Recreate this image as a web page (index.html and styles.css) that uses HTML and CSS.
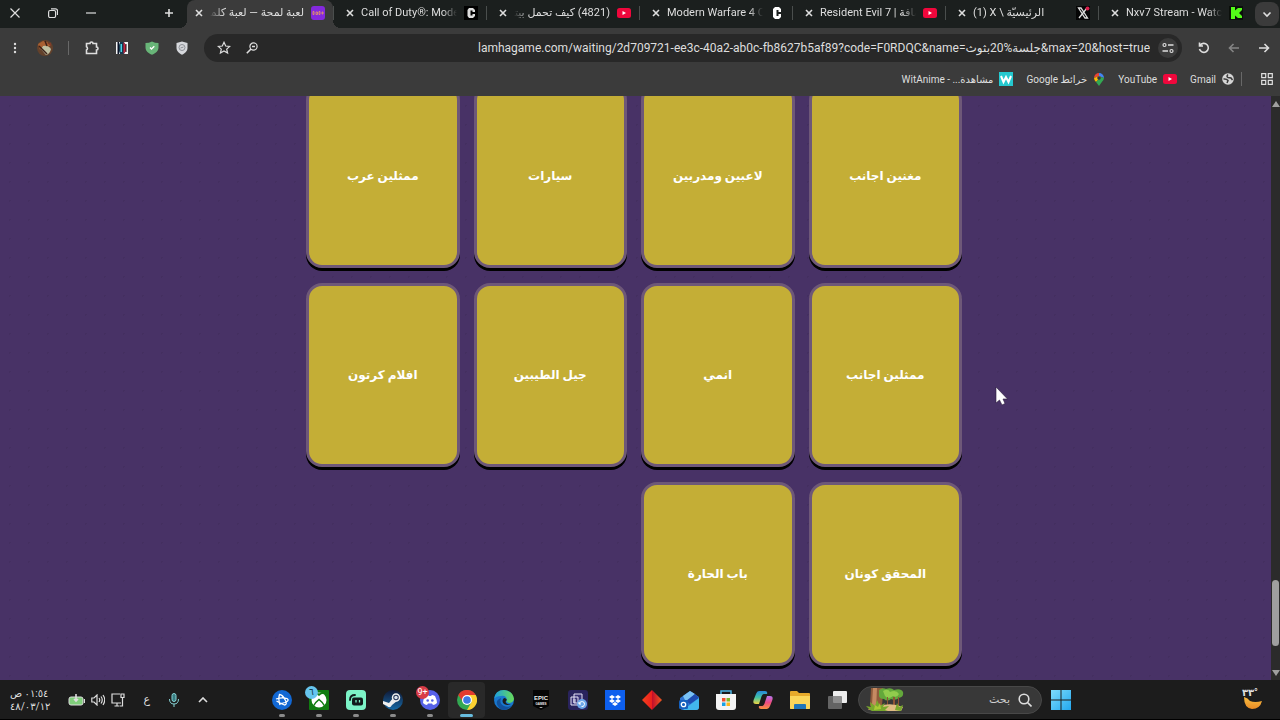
FILE: index.html
```html
<!DOCTYPE html>
<html lang="ar" dir="rtl">
<head>
    <meta charset="UTF-8">
    <meta name="viewport" content="width=device-width, initial-scale=1.0">
    <title>لعبة لمحة</title>
    <link rel="stylesheet" href="styles.css">
</head>
<body>
    <header class="browser">
        <div class="tab-strip">
            <button class="tab-search" aria-label="Search tabs">
                <svg width="10" height="10" viewBox="0 0 10 10"><path d="M1.5 3.5 5 7l3.500-3.500" class="line bold"/></svg>
            </button>
            <div class="tabs">
                <div class="tab">
                    <svg class="favicon" viewBox="0 0 14 14"><rect width="14" height="14" fill="#0b0f0b"/><path d="M2 1h4v3.500L9 2h4v2l-3 3 3 3v2H9L6 9.500V13H2z" fill="#53fc18"/></svg>
                    <span class="tab-title" dir="ltr">Nxv7 Stream - Watch</span>
                    <button class="tab-close" aria-label="Close tab"><svg width="8" height="8" viewBox="0 0 8 8"><path d="m1 1 6 6M7 1 1 7" class="line bold"/></svg></button>
                </div>
                <div class="tab">
                    <svg class="favicon" viewBox="0 0 14 14"><rect width="14" height="14" fill="#050505"/><path d="M2.500 2h2.500l6.500 10H9zM11 2 3 12" fill="none" stroke="#ddd" stroke-width="1.300"/><circle cx="11.500" cy="2.500" r="2" fill="#d8204c"/></svg>
                    <span class="tab-title" dir="ltr">(1) X \ الرئيسيّة</span>
                    <button class="tab-close" aria-label="Close tab"><svg width="8" height="8" viewBox="0 0 8 8"><path d="m1 1 6 6M7 1 1 7" class="line bold"/></svg></button>
                </div>
                <div class="tab">
                    <svg class="favicon" viewBox="0 0 14 14"><rect y="2" width="14" height="10" rx="2.500" fill="#f0073c"/><path d="m5.500 5 3.500 2-3.500 2z" fill="#fff"/></svg>
                    <span class="tab-title" dir="ltr">Resident Evil 7 | ضافة</span>
                    <button class="tab-close" aria-label="Close tab"><svg width="8" height="8" viewBox="0 0 8 8"><path d="m1 1 6 6M7 1 1 7" class="line bold"/></svg></button>
                </div>
                <div class="tab">
                    <svg class="favicon" viewBox="0 0 14 14"><path d="M5 1h4l2 2v3H8.500V4h-2v6h2V8H11v3l-2 2H5l-2-2V3z" fill="#fff"/></svg>
                    <span class="tab-title" dir="ltr">Modern Warfare 4 O</span>
                    <button class="tab-close" aria-label="Close tab"><svg width="8" height="8" viewBox="0 0 8 8"><path d="m1 1 6 6M7 1 1 7" class="line bold"/></svg></button>
                </div>
                <div class="tab">
                    <svg class="favicon" viewBox="0 0 14 14"><rect y="2" width="14" height="10" rx="2.500" fill="#f0073c"/><path d="m5.500 5 3.500 2-3.500 2z" fill="#fff"/></svg>
                    <span class="tab-title" dir="rtl">(4821) كيف تحمل بيتا</span>
                    <button class="tab-close" aria-label="Close tab"><svg width="8" height="8" viewBox="0 0 8 8"><path d="m1 1 6 6M7 1 1 7" class="line bold"/></svg></button>
                </div>
                <div class="tab">
                    <svg class="favicon" viewBox="0 0 14 14"><rect width="14" height="14" fill="#000"/><path d="M5 2h4l2 2v2H8.500V4.500h-2v5h2V8H11v2l-2 2H5l-1.500-2V4z" fill="#ddd"/></svg>
                    <span class="tab-title" dir="ltr">Call of Duty®: Mode</span>
                    <button class="tab-close" aria-label="Close tab"><svg width="8" height="8" viewBox="0 0 8 8"><path d="m1 1 6 6M7 1 1 7" class="line bold"/></svg></button>
                </div>
                <div class="tab active">
                    <svg class="favicon" viewBox="0 0 14 14"><rect width="14" height="14" rx="3" fill="#8429dd"/><path d="M2 5.500h1v3H2zM5 6h1.500v2.500H5zM8 5.500h1v3H8zM11 6h1v2h-1z" fill="none" stroke="#e8a060" stroke-width=".8"/></svg>
                    <span class="tab-title" dir="rtl">لعبة لمحة — لعبة كلما</span>
                    <button class="tab-close" aria-label="Close tab"><svg width="8" height="8" viewBox="0 0 8 8"><path d="m1 1 6 6M7 1 1 7" class="line bold"/></svg></button>
                </div>
            </div>
            <button class="new-tab" aria-label="New tab"><svg width="10" height="10" viewBox="0 0 10 10"><path d="M5 1v8M1 5h8" class="line bold"/></svg></button>
            <div class="window-controls">
                <button aria-label="Minimize"><svg width="10" height="10" viewBox="0 0 10 10"><path d="M0 5h10" class="line"/></svg></button>
                <button aria-label="Restore"><svg width="10" height="10" viewBox="0 0 10 10"><rect x=".6" y="2.500" width="7" height="7" rx="1.500" class="line"/><path d="M3 .8h4.500a2 2 0 0 1 2 2V7" class="line"/></svg></button>
                <button aria-label="Close"><svg width="10" height="10" viewBox="0 0 10 10"><path d="m.5.5 9 9M9.500.5l-9 9" class="line"/></svg></button>
            </div>
        </div>

        <div class="toolbar">
            <div class="nav-buttons">
                <button aria-label="Back"><svg width="12" height="12" viewBox="0 0 12 12"><path d="M1 6h9.500M6.500 2l4 4-4 4" class="line bold"/></svg></button>
                <button aria-label="Forward" disabled><svg width="12" height="12" viewBox="0 0 12 12"><path d="M11 6H1.500M5.500 2l-4 4 4 4" class="line bold"/></svg></button>
                <button aria-label="Reload"><svg width="12" height="12" viewBox="0 0 12 12"><path d="M2 3.500A4.500 4.500 0 1 1 1.500 7M1.500.5v3.500H5" class="line bold"/></svg></button>
            </div>
            <div class="omnibox">
                <button class="site-info" aria-label="Site information"><svg width="12" height="12" viewBox="0 0 12 12"><circle cx="2.500" cy="3" r="1.500" class="line"/><path d="M6 3h5.500M.5 9H6" class="line bold"/><circle cx="9.500" cy="9" r="1.500" class="line"/></svg></button>
                <input type="text" class="url" dir="ltr" aria-label="Address" value="lamhagame.com/waiting/2d709721-ee3c-40a2-ab0c-fb8627b5af89?code=F0RDQC&amp;name=جلسة%20بثوث&amp;max=20&amp;host=true">
                <button class="zoom" aria-label="Zoom"><svg width="12" height="12" viewBox="0 0 12 12"><circle cx="7.500" cy="4.500" r="3.600" class="line"/><path d="M5 7 .8 11.200M6 4.500h3" class="line bold"/></svg></button>
                <button class="star" aria-label="Bookmark"><svg width="14" height="14" viewBox="0 0 14 14"><path d="m7 1.300 1.700 3.700 4 .4-3 2.700.9 4L7 10l-3.600 2.100.9-4-3-2.700 4-.4z" class="line"/></svg></button>
            </div>
            <div class="extensions">
                <button aria-label="Shield"><svg width="14" height="14" viewBox="0 0 14 14"><path d="M7 .5 12.500 2v5c0 3-2.500 5.500-5.500 6.700C4 12.500 1.500 10 1.500 7V2z" fill="#d6d8dc"/><circle cx="7" cy="6.500" r="3" fill="none" stroke="#8d9096"/><path d="m5.500 7 3-1" stroke="#8d9096"/></svg></button>
                <button aria-label="Protection"><svg width="14" height="14" viewBox="0 0 14 14"><path d="M7 .5q3 1.500 6.500 1.500v4.500c0 3.500-3 6-6.500 7.200C3.500 12.500.5 10 .5 6.500V2Q4 2 7 .5" fill="#68b578"/><path d="m5 6.500 1.500 1.500L9.300 5.200" fill="none" stroke="#fff" stroke-width="1.300"/></svg></button>
                <button aria-label="Extension"><svg width="14" height="14" viewBox="0 0 14 14"><rect x="1" y="1" width="12" height="12" fill="#f5f5f5"/><path d="M2.500 1h1.500v12H2.500z" fill="#0b1328"/><path d="M5 1h4l1.500 3v6L9 13H5L4 10V4z" fill="#163a50"/><path d="M5.500 3H7v8H5.500z" fill="#49d5e8"/><path d="M8.500 1 11 4v6l-2.500 3z" fill="#cb243d"/><path d="M10.500 3h1v8h-1z" fill="#101018"/></svg></button>
                <button aria-label="Extensions"><svg width="15" height="14" viewBox="0 0 15 14"><path d="M1.500 2.500H5a1.500 1.500 0 0 1 3 0h3.500V6a1.500 1.500 0 0 1 0 3v3.500h-10V9a1.800 1.800 0 0 0 0-3.200z" class="line bold"/></svg></button>
                <span class="divider"></span>
                <button aria-label="Profile"><svg width="16" height="16" viewBox="0 0 16 16"><circle cx="8" cy="8" r="8" fill="#63412b"/><path d="M1 4 6 1l4 1 4 3-3 2-5-1-3 4z" fill="#a96032"/><path d="M6 6q5-1 8 3-1 5-5 6l-5-6z" fill="#bfc0a1"/><path d="m2 6 8 8M8 1l2 5" stroke="#3b2018" stroke-width="1.500"/><path d="M10 3h4v3z" fill="#813b28"/></svg></button>
                <button aria-label="Menu"><svg width="4" height="12" viewBox="0 0 4 12" fill="#ddd"><circle cx="2" cy="2" r="1.200"/><circle cx="2" cy="6" r="1.200"/><circle cx="2" cy="10" r="1.200"/></svg></button>
            </div>
        </div>

        <nav class="bookmarks">
            <button class="apps" aria-label="Apps"><svg width="12" height="12" viewBox="0 0 12 12"><path d="M.7.7h4v4h-4zM7.300.7h4v4h-4zM.7 7.300h4v4h-4zM7.300 7.300h4v4h-4z" class="line"/></svg></button>
            <span class="divider"></span>
            <a href="#"><svg width="12" height="12" viewBox="0 0 12 12"><circle cx="6" cy="6" r="5.800" fill="#d5d5d5"/><path d="M6 1.500q-2 2 0 3l3 .5 1.500 2M1.500 6q3-.5 4.500 1.500L5 10" fill="none" stroke="#3b3b3b" stroke-width="1.500"/></svg><span>Gmail</span></a>
            <a href="#"><svg width="14" height="14" viewBox="0 0 14 14"><rect y="2" width="14" height="10" rx="2.500" fill="#f0073c"/><path d="m5.500 5 3.500 2-3.500 2z" fill="#fff"/></svg><span>YouTube</span></a>
            <a href="#"><svg width="12" height="14" viewBox="0 0 12 14"><path d="M6 1a5 5 0 0 0-5 5l5-2z" fill="#ea4335"/><path d="M6 1a5 5 0 0 1 5 5L6 4z" fill="#4285f4"/><path d="M1 6q0 2 2 4l5-5-2-1z" fill="#fbbc04"/><path d="M11 6q0 2-2.500 4.500L6 14l-3-4 5-5z" fill="#34a853"/><circle cx="6" cy="6" r="1.800" fill="#334"/></svg><span>خرائط Google</span></a>
            <a href="#"><svg width="14" height="14" viewBox="0 0 14 14"><rect width="14" height="14" fill="#25c9cf"/><path d="m2 4 2.500 6L7 5l2.500 5L12 4" fill="none" stroke="#fff" stroke-width="2"/></svg><span>مشاهدة... - WitAnime</span></a>
        </nav>
    </header>

    <div class="viewport">
        <div class="scrollbar">
            <svg width="8" height="6" viewBox="0 0 8 6"><path d="M4 0 8 6H0z" fill="#9f9f9f"/></svg>
            <div class="track"><div class="thumb"></div></div>
            <svg width="8" height="6" viewBox="0 0 8 6"><path d="M0 0h8L4 6z" fill="#9f9f9f"/></svg>
        </div>
        <main>
            <div class="categories">
                <button class="card">مغنين اجانب</button>
                <button class="card">لاعبين ومدربين</button>
                <button class="card">سيارات</button>
                <button class="card">ممثلين عرب</button>
                <button class="card">ممثلين اجانب</button>
                <button class="card">انمي</button>
                <button class="card">جيل الطيبين</button>
                <button class="card">افلام كرتون</button>
                <button class="card">المحقق كونان</button>
                <button class="card">باب الحارة</button>
            </div>
        </main>
    </div>

    <footer class="taskbar">
        <div class="weather">
            <svg width="22" height="14" viewBox="0 0 22 14"><defs><linearGradient id="moon" x2="0" y2="1"><stop stop-color="#f8be42"/><stop offset="1" stop-color="#e88a25"/></linearGradient></defs><path d="M2 1q4 1 6 4 5 2 12 0-2 8-10 8-8-1-8-12" fill="url(#moon)"/></svg>
            <span class="temp" dir="ltr">٣٣°</span>
        </div>
        <button class="task" aria-label="Start"><svg width="20" height="20" viewBox="0 0 20 20"><defs><linearGradient id="win" x2="1" y2="1"><stop stop-color="#7fdcfb"/><stop offset="1" stop-color="#22a7ef"/></linearGradient></defs><path d="M0 0h9.500v9.500H0zM10.500 0H20v9.500h-9.500zM0 10.500h9.500V20H0zM10.500 10.500H20V20h-9.500z" fill="url(#win)"/></svg></button>
        <div class="search">
            <svg width="14" height="14" viewBox="0 0 14 14"><circle cx="6" cy="6" r="4.800" class="line bold"/><path d="m9.500 9.500 4 4" class="line bold"/></svg>
            <input type="text" aria-label="بحث" placeholder="بحث">
            <svg width="40" height="24" viewBox="0 0 40 24"><path d="M6 0h12v4l-1 14H5z" fill="#8f5b3b"/><path d="M8 0h4l-1 22H3l4-5z" fill="#c58a62"/><path d="M14 2q4-3 7-1 5-2 8 1 7-2 9 2 1 5-4 6-4 3-8 1-4 3-7 0-6 0-5-5z" fill="#63a83b"/><path d="M18 3q5-3 7 1 6-3 9 2-2 4-6 2-5 4-8 0z" fill="#91cc4d"/><path d="M28 9h2v9h-2M22 9h1v9h-1M33 9h1v9h-1" fill="#8e5534"/><path d="M14 18q12-4 24 1l-2 4H12z" fill="#e0bc83"/><path d="m5 22-4-4 5 1-1-5 5 4 2-6 3 6 5-3-2 4 6-1-4 4 3 1H7zM30 22l2-7 2 4 4-2-2 6z" fill="#79a82d"/><path d="m9 22 1-5 3 2 2-4 1 6z" fill="#a9cb35"/></svg>
        </div>
        <button class="task" aria-label="Task view"><svg width="20" height="20" viewBox="0 0 20 20"><rect x="6" y="1" width="14" height="12" rx="1" fill="#eee"/><rect x="1" y="6" width="14" height="13" rx="1" fill="#777" opacity=".8"/></svg></button>
        <button class="task" aria-label="Files"><svg width="20" height="20" viewBox="0 0 20 20"><path d="M0 2q0-1 1-1h6l2 2h10q1 0 1 1v14q0 1-1 1H1q-1 0-1-1z" fill="#e7aa2b"/><path d="M0 6h20v12q0 1-1 1H1q-1 0-1-1z" fill="#fbd65a"/><path d="M4 19v-4q0-1 1-1h10q1 0 1 1v4z" fill="#2176b9"/></svg></button>
        <button class="task" aria-label="Copilot"><svg width="20" height="20" viewBox="0 0 20 20"><defs><linearGradient id="cpa" x2="0" y2="1"><stop stop-color="#2588dd"/><stop offset=".5" stop-color="#44c3a3"/><stop offset="1" stop-color="#efd440"/></linearGradient><linearGradient id="cpb" x2="0" y2="1"><stop stop-color="#b676ef"/><stop offset=".5" stop-color="#ed4b83"/><stop offset="1" stop-color="#f7913e"/></linearGradient></defs><path d="M6 1h6q3 0 2 3h-3q-2 0-3 4l-2 6H3q-4 0-2-5l2-5q1-3 3-3" fill="url(#cpa)"/><path d="M14 19H8q-3 0-2-3h3q2 0 3-4l2-6h3q4 0 2 5l-2 5q-1 3-3 3" fill="url(#cpb)"/></svg></button>
        <button class="task" aria-label="Store"><svg width="20" height="20" viewBox="0 0 20 20"><path d="M5 5V1h10v4" fill="none" stroke="#4bb4e4" stroke-width="1.500"/><path d="M0 4h20v13q0 3-3 3H3q-3 0-3-3z" fill="#f4f4f4"/><path d="M6 8h3.500v3.500H6z" fill="#f04e2c"/><path d="M10.500 8H14v3.500h-3.500z" fill="#7eb829"/><path d="M6 12.500h3.500V16H6z" fill="#18a0e5"/><path d="M10.500 12.500H14V16h-3.500z" fill="#fcb71b"/></svg></button>
        <button class="task" aria-label="Outlook"><svg width="20" height="20" viewBox="0 0 20 20"><path d="M1 8 11 1l9 6v10q0 3-3 3H4q-3 0-3-3z" fill="#2f74d0"/><path d="m4 6 7-5 5 3-9 8z" fill="#79c2f5"/><path d="m7 11 9-7 4 4-9 6z" fill="#1e4cb0"/><path d="M4 20 20 8v9q0 3-3 3z" fill="#42b7ed"/><rect y="10" width="9" height="9" rx="1.500" fill="#1560bd"/><circle cx="4.500" cy="14.500" r="2.200" fill="none" stroke="#fff" stroke-width="1.300"/></svg></button>
        <button class="task" aria-label="Diamond"><svg width="20" height="20" viewBox="0 0 20 20"><defs><linearGradient id="dia"><stop stop-color="#f2421c"/><stop offset=".48" stop-color="#ed201d"/><stop offset=".5" stop-color="#c20c2b"/><stop offset="1" stop-color="#ef5a20"/></linearGradient></defs><path d="m10 0 10 10-10 10L0 10z" fill="url(#dia)"/></svg></button>
        <button class="task" aria-label="Dropbox"><svg width="20" height="20" viewBox="0 0 20 20"><rect width="20" height="20" fill="#0d5fee"/><path d="m7 5 3 2-3 2-3-2zM13 5l3 2-3 2-3-2zM7 9l3 2-3 2-3-2zM13 9l3 2-3 2-3-2zM10 12l3 2-3 2-3-2z" fill="#fff"/></svg></button>
        <button class="task" aria-label="Documents"><svg width="20" height="20" viewBox="0 0 20 20"><rect width="20" height="20" rx="3" fill="#29235d"/><path d="M6 4h8v9H6zM3 7h7v8H3zM5 10h3M5 12h3" fill="#3a3376" stroke="#e5e2f5"/><circle cx="14" cy="14" r="5" fill="#6da5e8"/><path d="M11.500 14a2.500 2.500 0 1 1 2 2.500M11 12v2h2" fill="none" stroke="#fff"/></svg></button>
        <button class="task" aria-label="Epic Games"><svg width="20" height="20" viewBox="0 0 20 20"><path d="M2 0h16v16l-8 4-8-4z" fill="#050505"/><text x="10" y="10" class="epic">EPIC</text><text x="10" y="15" class="games">GAMES</text><path d="M8 17h4l-2 1z" fill="#ddd"/></svg></button>
        <button class="task" aria-label="Edge"><svg width="20" height="20" viewBox="0 0 20 20"><defs><linearGradient id="edge" x2="1"><stop stop-color="#1b9de2"/><stop offset="1" stop-color="#6add55"/></linearGradient></defs><circle cx="10" cy="10" r="10" fill="#1978cf"/><path d="M0 9Q1 0 10 0q9 1 10 9-1 4-5 4-4-1-2-3-1-5-6-4-5 0-7 3" fill="url(#edge)"/><path d="M7 8q-2 6 3 8 4 2 8-1-5 7-12 4Q-1 11 7 8" fill="#12519c"/><path d="M10 8q-3 3 0 6 4 2 7 0-3 1-5-1-1-2 1-3-1-2-3-2" fill="#1c1c1c"/></svg></button>
        <button class="task current" aria-label="Chrome"><svg width="20" height="20" viewBox="0 0 20 20"><circle cx="10" cy="10" r="10" fill="#33a852"/><path d="M10 10 1.300 5A10 10 0 0 1 18.700 5z" fill="#e33b2e"/><path d="M10 5h8.700A10 10 0 0 1 10 20l4.500-8z" fill="#fdd131"/><path d="M1.300 5 6 12l4-7z" fill="#e33b2e"/><circle cx="10" cy="10" r="5" fill="#fff"/><circle cx="10" cy="10" r="3.800" fill="#3c78e4"/></svg></button>
        <button class="task open" aria-label="Discord"><svg width="20" height="20" viewBox="0 0 20 20"><circle cx="10" cy="10" r="10" fill="#5661e9"/><path d="M5 6q2-1 3-1l1 1h2l1-1q1 0 3 1 2 4 2 7-2 2-4 2l-1-1.500H8L7 15q-2 0-4-2 0-3 2-7" fill="#fff"/><circle cx="7.700" cy="10.500" r="1.300" fill="#5661e9"/><circle cx="12.300" cy="10.500" r="1.300" fill="#5661e9"/></svg><span class="badge red" dir="ltr">9+</span></button>
        <button class="task open" aria-label="Steam"><svg width="20" height="20" viewBox="0 0 20 20"><defs><linearGradient id="steam" x2="0" y2="1"><stop stop-color="#101936"/><stop offset="1" stop-color="#1769a5"/></linearGradient></defs><circle cx="10" cy="10" r="10" fill="url(#steam)"/><path d="m0 11 6 2 4-5 4 3-5 4q-2 4-5 1l-4-2z" fill="#eee"/><circle cx="13" cy="7.500" r="3.500" fill="#26365a" stroke="#eee" stroke-width="1.500"/><circle cx="13" cy="7.500" r="1.700" fill="#dce6ef"/></svg></button>
        <button class="task open" aria-label="Streaming"><svg width="20" height="20" viewBox="0 0 20 20"><rect width="20" height="20" rx="4" fill="#7cf3c7"/><path d="M4 10q0-5 5-5" fill="none" stroke="#111b1b" stroke-width="1.800" stroke-linecap="round"/><rect x="6" y="7.500" width="11" height="8" rx="2" fill="#111b1b"/><path d="M10 10v2.500M13.500 10v2.500" stroke="#7cf3c7" stroke-width="1.300"/></svg></button>
        <button class="task open" aria-label="Xbox"><svg width="20" height="20" viewBox="0 0 20 20"><rect width="20" height="20" rx="1" fill="#107c10"/><circle cx="10" cy="10" r="7.500" fill="#fff"/><path d="M3.500 4Q7 3 10 6q3-3 6.500-2Q13 2 10 3.500 7 2 3.500 4M10 8.500q4 3 6 7l-1 1q-2-4-5-6-3 2-5 6l-1-1q2-4 6-7" fill="#107c10"/></svg><span class="badge blue">٦</span></button>
        <button class="task open" aria-label="Battle.net"><svg width="20" height="20" viewBox="0 0 20 20"><circle cx="10" cy="10" r="10" fill="#1268d4"/><g fill="none" stroke="#fff" stroke-width="1.300"><path d="M8 15Q6 9 7.500 4.500q3 0 6 6 2 4-1 4.500-3-1-8-4M4 9q6-2 11-.500 3 2-2 4-3 1-5 1"/></g></svg></button>

        <div class="tray">
            <button aria-label="Show hidden icons"><svg width="10" height="6" viewBox="0 0 10 6"><path d="M1 5 5 1l4 4" class="line bold"/></svg></button>
            <button aria-label="Microphone"><svg width="12" height="14" viewBox="0 0 12 14"><g fill="none" stroke="#88d4d6"><rect x="4" y=".5" width="4" height="8" rx="2" fill="#377c80"/><path d="M1.500 6q0 5 4.500 5t4.500-5M6 11v3"/></g></svg></button>
            <button class="lang">ع</button>
            <button class="system" aria-label="Network, volume, battery">
                <svg width="14" height="14" viewBox="0 0 14 14"><path d="M9 1H1v9h9M3.500 13h5M6 10v3M10 1h3v3.500h-3zM11.500 4.500V13H9" class="line"/></svg>
                <svg width="14" height="12" viewBox="0 0 14 12"><path d="M.8 4v4H3l3 3V1L3 4zM8 4q1.500 2 0 4M10 2.500q2.500 3.500 0 7M12 1q3.500 5 0 10" class="line"/></svg>
                <svg width="17" height="12" viewBox="0 0 17 12"><rect x="1" y="3" width="14" height="8" rx="2" fill="#80ce7b" stroke="#ddd"/><path d="M16.500 5v4" class="line"/><path d="M8 0v7M6 5l2 2 2-2" class="line bold"/></svg>
            </button>
            <button class="clock"><span>٠١:٥٤ ص</span><span>٤٨/٠٣/١٢</span></button>
        </div>
    </footer>

    <svg class="cursor" width="14" height="20" viewBox="0 0 14 20"><path d="M1 1v16l3.500-3 2.500 5 3-1.500L8 13h4.500z" fill="#fff" stroke="#2b1d3c" stroke-width=".6"/></svg>
</body>
</html>
```
FILE: styles.css
```css
:root {
    --strip: #1b1f1e;
    --chrome: #3b3b3b;
    --field: #282828;
    --text: #dedede;
    --purple: #483266;
    --gold: #c4ae36;
    --taskbar: #1c1c1c;
}

* {
    box-sizing: border-box;
}

body {
    margin: 0;
    height: 100vh;
    display: flex;
    flex-direction: column;
    overflow: hidden;
    font-family: Roboto, "Noto Sans", "DejaVu Sans", sans-serif;
    font-size: 11px;
    color: var(--text);
    background: var(--purple);
}

button {
    display: flex;
    align-items: center;
    justify-content: center;
    flex-shrink: 0;
    margin: 0;
    padding: 0;
    border: none;
    background: none;
    color: inherit;
    font: inherit;
}

input {
    min-width: 0;
    padding: 0;
    border: none;
    outline: none;
    background: none;
    color: inherit;
    font: inherit;
}

svg {
    display: block;
    flex-shrink: 0;
}

.line {
    fill: none;
    stroke: #dedede;
    stroke-width: 1.2;
}

.bold {
    stroke-width: 1.6;
}

.divider {
    width: 1px;
    height: 14px;
    background: #686868;
}

/* tabs */
.tab-strip {
    display: flex;
    align-items: center;
    height: 28px;
    background: var(--strip);
}

.tab-search {
    width: 24px;
    height: 24px;
    margin: 0 1px 0 4px;
    border-radius: 8px;
    background: var(--chrome);
}

.tabs {
    display: flex;
    height: 28px;
    min-width: 0;
}

.tab {
    position: relative;
    display: flex;
    align-items: center;
    gap: 7px;
    width: 153px;
    min-width: 0;
    padding: 0 8px 2px 12px;
    border-left: 1px solid #3c403f;
    border-image: linear-gradient(transparent 25%, #4a4e4d 25%, #4a4e4d 70%, transparent 70%) 1;
}

.favicon {
    width: 14px;
    height: 14px;
}

.tab-title {
    flex: 1;
    min-width: 0;
    overflow: hidden;
    white-space: nowrap;
    line-height: 16px;
}

.tab-title[dir="ltr"] {
    mask-image: linear-gradient(to left, transparent, #000 14px);
}

.tab-title[dir="rtl"] {
    mask-image: linear-gradient(to right, transparent, #000 14px);
}

.tab.active {
    width: 146px;
    padding-left: 8px;
    border: none;
    border-radius: 8px 8px 0 0;
    background: var(--chrome);
}

.tab.active::before,
.tab.active::after {
    content: "";
    position: absolute;
    bottom: 0;
    width: 8px;
    height: 8px;
}

.tab.active::before {
    left: -8px;
    background: radial-gradient(circle at 0 0, transparent 8px, var(--chrome) 8px);
}

.tab.active::after {
    right: -8px;
    background: radial-gradient(circle at 100% 0, transparent 8px, var(--chrome) 8px);
}

.new-tab {
    width: 24px;
    height: 24px;
    margin-right: 6px;
    padding-bottom: 2px;
}

.window-controls {
    display: flex;
    gap: 8px;
    margin-right: auto;
    padding-bottom: 2px;
}

.window-controls button {
    width: 30px;
    height: 24px;
}

/* address row */
.toolbar {
    display: flex;
    align-items: center;
    gap: 7px;
    height: 40px;
    background: var(--chrome);
}

.nav-buttons,
.extensions {
    display: flex;
    align-items: center;
}

.nav-buttons {
    padding-right: 1px;
}

.nav-buttons button,
.extensions button {
    width: 30px;
    height: 28px;
}

.nav-buttons button:disabled {
    opacity: 0.45;
}

.extensions .divider {
    margin: 0 8px;
}

.omnibox {
    display: flex;
    align-items: center;
    flex: 1;
    min-width: 0;
    height: 28px;
    padding: 0 4px 0 6px;
    border-radius: 14px;
    background: var(--field);
}

.omnibox button {
    width: 28px;
    height: 28px;
}

.omnibox .site-info {
    width: 20px;
    height: 20px;
    border-radius: 50%;
    background: var(--chrome);
}

.url {
    flex: 1;
    margin: 0 8px;
    font-size: 12px;
    line-height: 16px;
    text-align: right;
}

.bookmarks {
    display: flex;
    align-items: center;
    gap: 13px;
    height: 28px;
    padding: 0 7px 6px;
    background: var(--chrome);
    font-size: 10px;
}

.bookmarks .apps {
    margin-left: 6px;
}

.bookmarks .divider {
    margin-left: -6px;
}

.bookmarks a {
    display: flex;
    align-items: center;
    gap: 6px;
    color: inherit;
    text-decoration: none;
    white-space: nowrap;
}

/* page */
.viewport {
    display: flex;
    flex: 1;
    min-height: 0;
}

main {
    display: flex;
    flex-direction: column;
    justify-content: flex-end;
    align-items: center;
    flex: 1;
    padding: 0 0 14px;
    overflow: hidden;
    background: radial-gradient(circle, rgba(0, 0, 0, 0.06) 1px, transparent 1px) 0 0 / 19px 19px var(--purple);
}

.categories {
    display: grid;
    grid-template-columns: repeat(4, 1fr);
    gap: 15px 14px;
    width: 100%;
    max-width: 656px;
    margin-left: 3px;
}

.card {
    height: 184px;
    border: 3px solid #6e5878;
    border-radius: 16px;
    background: var(--gold);
    box-shadow: 0 3px 0 #000;
    color: #fff;
    font-size: 12px;
    font-weight: 900;
}

main .categories {
    margin: 0 3px 0 0;
    translate: none;
}

.scrollbar {
    display: flex;
    flex-direction: column;
    align-items: center;
    width: 9px;
    padding: 5px 0 4px;
    background: #2b2b2b;
}

.track {
    display: flex;
    flex-direction: column;
    justify-content: flex-end;
    flex: 1;
    padding-bottom: 24px;
}

.thumb {
    width: 7px;
    height: 66px;
    border-radius: 4px;
    background: #9f9f9f;
}

/* taskbar */
.taskbar {
    display: flex;
    align-items: center;
    height: 40px;
    border-bottom: 1px solid #000;
    background: var(--taskbar);
}

.weather {
    position: relative;
    flex: 0 0 201px;
    padding: 6px 16px 0 0;
}

.temp {
    position: absolute;
    top: -4px;
    right: 22px;
    font-size: 10px;
    font-weight: bold;
    line-height: 14px;
}

.task {
    position: relative;
    width: 37px;
    height: 36px;
}

.task.current {
    border-radius: 4px;
    background: #292929;
}

.task.open::after,
.task.current::after {
    content: "";
    position: absolute;
    bottom: 1px;
    width: 6px;
    height: 3px;
    border-radius: 2px;
    background: #8b8b8b;
}

.task.current::after {
    width: 13px;
    background: #68bde0;
}

.badge {
    position: absolute;
    top: 4px;
    left: 5px;
    width: 13px;
    height: 13px;
    border-radius: 7px;
    font-size: 9px;
    line-height: 13px;
    text-align: center;
}

.badge.red {
    background: #d93c48;
    color: #fff;
}

.badge.blue {
    background: #66c5ee;
    color: #143a4a;
}

.epic,
.games {
    fill: #eee;
    font-family: "Liberation Sans", sans-serif;
    font-weight: bold;
    text-anchor: middle;
    direction: ltr;
}

.epic {
    font-size: 6px;
}

.games {
    font-size: 3px;
}

.search {
    display: flex;
    align-items: center;
    gap: 8px;
    flex: 0 1 184px;
    min-width: 0;
    height: 28px;
    margin-left: 3px;
    padding: 0 9px 0 6px;
    border: 1px solid #484848;
    border-radius: 14px;
    background: #383838;
}

.search input {
    flex: 1;
    width: 0;
}

.search input::placeholder {
    color: #cfcfcf;
}

.tray {
    display: flex;
    align-items: center;
    justify-content: flex-end;
    gap: 18px;
    flex: 1;
    padding-left: 10px;
}

.system {
    gap: 6px;
}

.clock {
    flex-direction: column;
    align-items: flex-end;
    font-size: 10px;
    line-height: 13px;
}

.cursor {
    position: absolute;
    top: 386px;
    left: 995px;
}
```
